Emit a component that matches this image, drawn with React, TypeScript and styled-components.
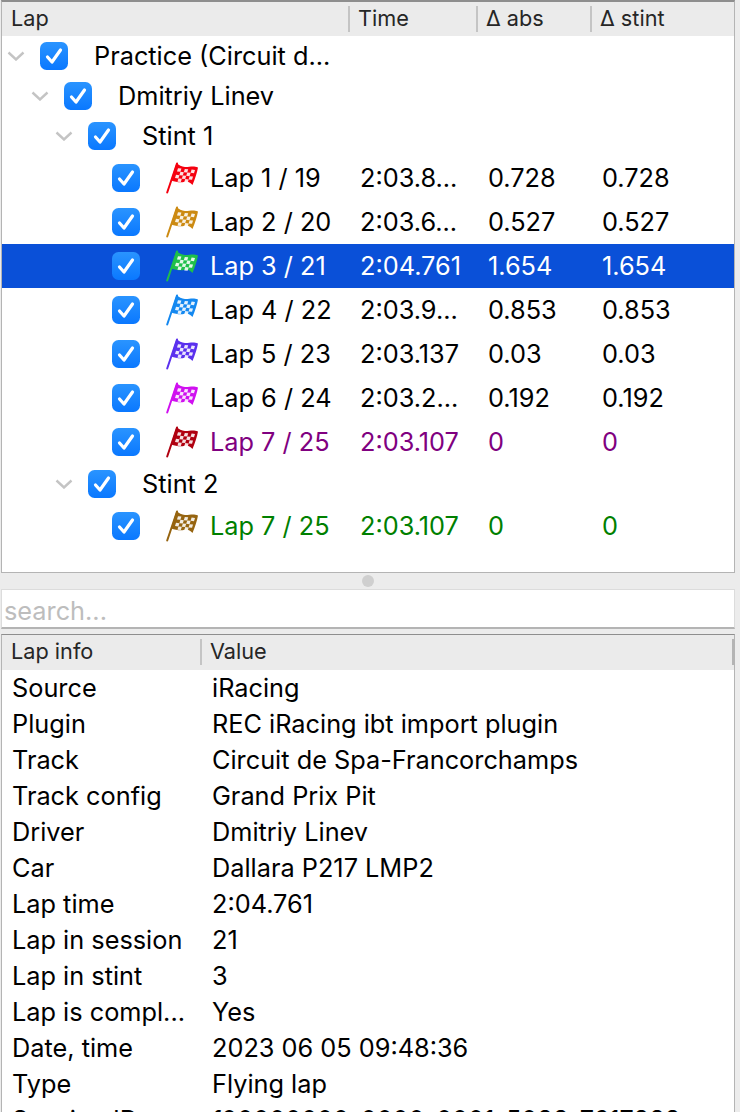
import styled, { createGlobalStyle } from "styled-components";

const GlobalStyle = createGlobalStyle`
  html, body {
    margin: 0;
    padding: 0;
    background: #ececec;
    overflow: hidden;
  }
  body {
    font-family: Inter, "Liberation Sans", Arial, sans-serif;
    font-size: 25.3px;
    line-height: 30px;
    color: #000;
  }
`;

const Page = styled.div`
  width: 740px;
  height: 1112px;
  overflow: hidden;
  display: flex;
  flex-direction: column;
  background: #ececec;
`;

const Panel = styled.div`
  width: 734px;
  margin-left: 1px;
  height: 573px;
  flex: none;
  box-sizing: border-box;
  background: #fff;
  border: 1px solid #b4b4b4;
  border-top: 2px solid #8e8e8e;
  overflow: hidden;
`;

const Header = styled.div<{ $h: number }>`
  height: ${(p) => p.$h}px;
  display: flex;
  background: #ebebeb;
  font-size: 21.7px;
  color: #262626;
`;

const HeaderCell = styled.div<{ $w: number }>`
  width: ${(p) => p.$w}px;
  flex: none;
  box-sizing: border-box;
  padding-left: 9px;
  line-height: 33px;
  position: relative;
  &:not(:first-child)::before {
    content: "";
    position: absolute;
    left: -1px;
    top: 4px;
    height: 26px;
    width: 2px;
    background: #c4c4c4;
  }
`;

const Row = styled.div<{ $h: number; $sel?: boolean; $color?: string }>`
  height: ${(p) => p.$h}px;
  display: flex;
  align-items: center;
  background: ${(p) => (p.$sel ? "#0a50d8" : "transparent")};
  color: ${(p) => (p.$sel ? "#fff" : p.$color || "#000")};
`;

const TreeCell = styled.div<{ $indent: number }>`
  width: 347px;
  flex: none;
  display: flex;
  align-items: center;
  padding-left: ${(p) => p.$indent}px;
  box-sizing: border-box;
  white-space: nowrap;
`;

const Chevron = styled.svg`
  width: 18px;
  height: 10px;
  flex: none;
  margin-right: 15px;
`;

const Check = styled.svg`
  width: 28px;
  height: 28px;
  flex: none;
`;

const Flag = styled.svg`
  width: 34px;
  height: 32px;
  flex: none;
  margin-left: 26px;
  margin-right: 10px;
`;

const TreeLabel = styled.span`
  margin-left: 26px;
`;

const LapLabel = styled.span``;

const ValueCell = styled.div<{ $w: number }>`
  width: ${(p) => p.$w}px;
  flex: none;
  box-sizing: border-box;
  padding-left: 11px;
  white-space: nowrap;
`;

const Splitter = styled.div`
  height: 16px;
  flex: none;
  width: 736px;
  display: flex;
  align-items: center;
  justify-content: center;
`;

const SplitterDot = styled.div`
  width: 12px;
  height: 12px;
  border-radius: 50%;
  background: #cfcfcf;
`;

const Search = styled.div`
  width: 734px;
  margin-left: 1px;
  height: 40px;
  flex: none;
  box-sizing: border-box;
  background: #fff;
  border: 1px solid #dcdcdc;
  border-bottom: 2px solid #b4b4b4;
  color: #bdbdbd;
  padding-left: 2px;
  line-height: 42px;
`;

const InfoPanel = styled.div`
  width: 734px;
  margin-left: 1px;
  margin-top: 5px;
  flex: 1;
  box-sizing: border-box;
  background: #fff;
  border-left: 1px solid #b4b4b4;
  border-right: 1px solid #b4b4b4;
  border-top: 1px solid #8e8e8e;
  overflow: hidden;
`;

const InfoRow = styled.div`
  height: 36px;
  display: flex;
  align-items: center;
  white-space: nowrap;
`;

const InfoName = styled.div`
  width: 200px;
  flex: none;
  box-sizing: border-box;
  padding-left: 10px;
`;

const InfoValue = styled.div`
  padding-left: 10px;
`;

const EndMark = styled.div`
  flex: 1;
  position: relative;
  &::after {
    content: "";
    position: absolute;
    right: 0;
    top: 4px;
    height: 26px;
    width: 2px;
    background: #b4b4b4;
  }
`;

const Arrow = () => (
  <Chevron viewBox="0 0 18 10">
    <path d="M1.5 1.5 L9 8.5 L16.5 1.5" fill="none" stroke="#c4c4c4" strokeWidth="2.4" />
  </Chevron>
);

const CheckBox = () => (
  <Check viewBox="0 0 28 28">
    <defs>
      <linearGradient id="cb" x1="0" y1="0" x2="0" y2="1">
        <stop offset="0" stopColor="#2a94ff" />
        <stop offset="1" stopColor="#0a78ff" />
      </linearGradient>
    </defs>
    <rect width="28" height="28" rx="6.5" fill="url(#cb)" />
    <path d="M7.5 15 L12 20 L20.5 8" fill="none" stroke="#fff" strokeWidth="3.2" strokeLinecap="round" strokeLinejoin="round" />
  </Check>
);

const CheckeredFlag = ({ color }: { color: string }) => {
  const squares: React.ReactElement[] = [];
  for (let r = 0; r < 4; r++) {
    for (let c = 0; c < 5; c++) {
      if ((r + c) % 2 === 0) {
        squares.push(<rect key={r + "-" + c} x={c * 3.4} y={r * 3.3} width="3.4" height="3.3" fill="#fff" opacity="0.88" />);
      }
    }
  }
  return (
    <Flag viewBox="0 0 34 32">
      <path d="M1.2 30.5 L11 1.5" stroke={color} strokeWidth="2" fill="none" strokeLinecap="round" />
      <path d="M10.5 1 C13 3 15.5 4.8 19 5 C23 5.3 27 3.2 32 5.5 C31 11 29 17 26.5 23 C24 20.5 21.5 19 18.5 19.8 C14.5 21 10 20 5 18.5 Z" fill={color} />
      <g transform="matrix(1 0.1 -0.3 1 12 6.2)">{squares}</g>
    </Flag>
  );
};

type Lap = {
  name: string;
  time: string;
  abs: string;
  stint: string;
  flag: string;
  color?: string;
  sel?: boolean;
};

const stint1: Lap[] = [
  { name: "Lap 1 / 19", time: "2:03.8...", abs: "0.728", stint: "0.728", flag: "#f5000f" },
  { name: "Lap 2 / 20", time: "2:03.6...", abs: "0.527", stint: "0.527", flag: "#cc8a12" },
  { name: "Lap 3 / 21", time: "2:04.761", abs: "1.654", stint: "1.654", flag: "#1fc04a", sel: true },
  { name: "Lap 4 / 22", time: "2:03.9...", abs: "0.853", stint: "0.853", flag: "#1488f0" },
  { name: "Lap 5 / 23", time: "2:03.137", abs: "0.03", stint: "0.03", flag: "#5a30ee" },
  { name: "Lap 6 / 24", time: "2:03.2...", abs: "0.192", stint: "0.192", flag: "#d010f0" },
  { name: "Lap 7 / 25", time: "2:03.107", abs: "0", stint: "0", flag: "#b00010", color: "#800080" },
];

const stint2: Lap[] = [
  { name: "Lap 7 / 25", time: "2:03.107", abs: "0", stint: "0", flag: "#966410", color: "#008000" },
];

const info = [
  ["Source", "iRacing"],
  ["Plugin", "REC iRacing ibt import plugin"],
  ["Track", "Circuit de Spa-Francorchamps"],
  ["Track config", "Grand Prix Pit"],
  ["Driver", "Dmitriy Linev"],
  ["Car", "Dallara P217 LMP2"],
  ["Lap time", "2:04.761"],
  ["Lap in session", "21"],
  ["Lap in stint", "3"],
  ["Lap is compl...", "Yes"],
  ["Date, time", "2023 06 05 09:48:36"],
  ["Type", "Flying lap"],
  ["Session ID", "f00000000-0000-0001-5088-7617888"],
];

const LapRow = ({ lap }: { lap: Lap }) => (
  <Row $h={44} $sel={lap.sel} $color={lap.color}>
    <TreeCell $indent={110}>
      <CheckBox />
      <CheckeredFlag color={lap.flag} />
      <LapLabel>{lap.name}</LapLabel>
    </TreeCell>
    <ValueCell $w={128}>{lap.time}</ValueCell>
    <ValueCell $w={114}>{lap.abs}</ValueCell>
    <ValueCell $w={140}>{lap.stint}</ValueCell>
  </Row>
);

const GroupRow = ({ indent, label }: { indent: number; label: string }) => (
  <Row $h={40}>
    <TreeCell $indent={indent}>
      <Arrow />
      <CheckBox />
      <TreeLabel>{label}</TreeLabel>
    </TreeCell>
  </Row>
);

const App = () => (
  <Page>
    <GlobalStyle />
    <Panel>
      <Header $h={34}>
        <HeaderCell $w={347}>Lap</HeaderCell>
        <HeaderCell $w={128}>Time</HeaderCell>
        <HeaderCell $w={114}>Δ abs</HeaderCell>
        <HeaderCell $w={144}>Δ stint</HeaderCell>
      </Header>
      <GroupRow indent={5} label="Practice (Circuit d..." />
      <GroupRow indent={29} label="Dmitriy Linev" />
      <GroupRow indent={53} label="Stint 1" />
      {stint1.map((lap) => (
        <LapRow key={lap.name} lap={lap} />
      ))}
      <GroupRow indent={53} label="Stint 2" />
      {stint2.map((lap) => (
        <LapRow key={lap.name} lap={lap} />
      ))}
    </Panel>
    <Splitter>
      <SplitterDot />
    </Splitter>
    <Search>search...</Search>
    <InfoPanel>
      <Header $h={35}>
        <HeaderCell $w={199}>Lap info</HeaderCell>
        <HeaderCell $w={200}>Value</HeaderCell>
        <EndMark />
      </Header>
      {info.map(([name, value]) => (
        <InfoRow key={name}>
          <InfoName>{name}</InfoName>
          <InfoValue>{value}</InfoValue>
        </InfoRow>
      ))}
    </InfoPanel>
  </Page>
);

export default App;
